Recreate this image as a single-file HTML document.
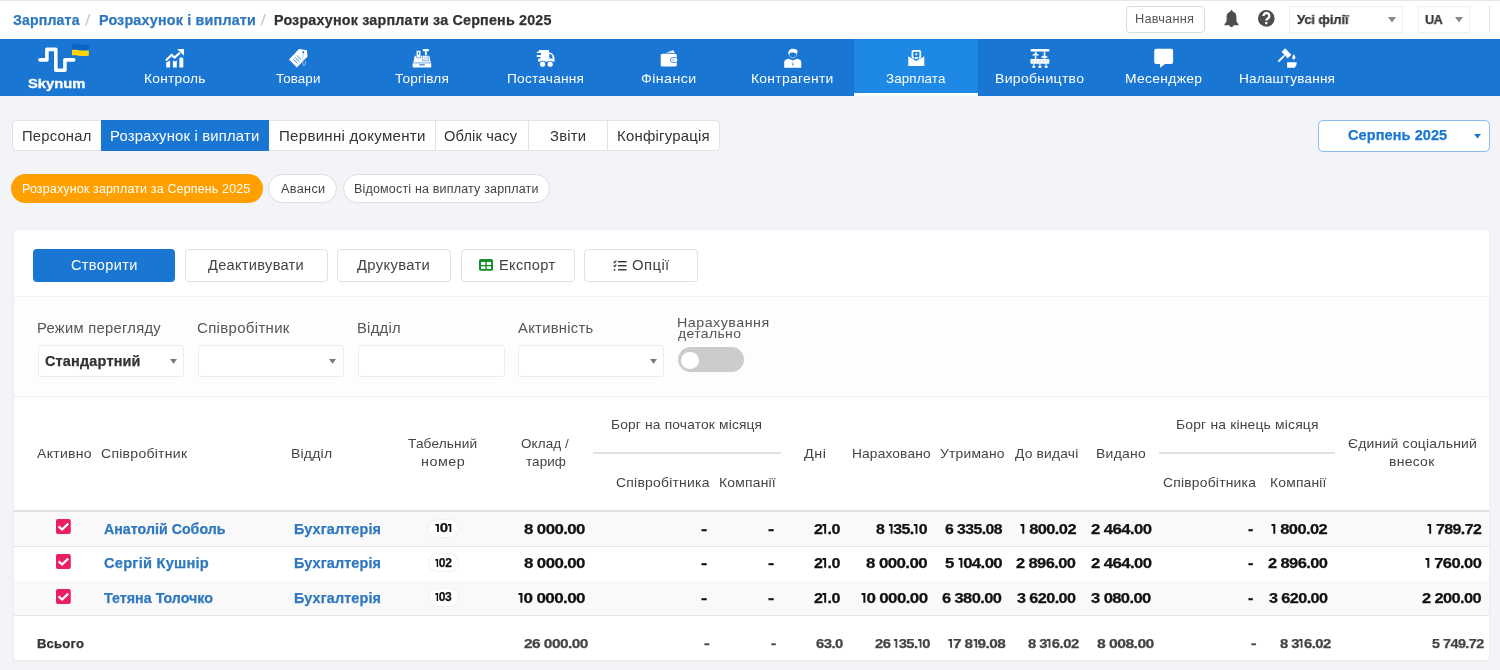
<!DOCTYPE html>
<html><head><meta charset="utf-8"><style>
html,body{margin:0;padding:0;}
body{width:1500px;height:670px;position:relative;overflow:hidden;background:#f3f4f8;font-family:"Liberation Sans",sans-serif;}
.t{position:absolute;white-space:nowrap;line-height:20px;transform-origin:0 0;will-change:transform;}
.b{position:absolute;}
</style></head><body>
<div class="b" style="left:0px;top:0px;width:1500px;height:39px;background:#fff;"></div>
<div class="b" style="left:0px;top:0px;width:1500px;height:1px;background:#e6e6e6;"></div>
<div class="t" style="left:13.07px;top:11.00px;font-size:13.8px;font-weight:bold;color:#2f78bf;letter-spacing:0.143px;transform:scaleX(1.0241);-webkit-text-stroke:0.25px #2f78bf;">Зарплата</div>
<svg class="b" style="left:0;top:0" width="300" height="39"><path d="M85.7 25.6L89.8 14M261.2 25.6L265.3 14" stroke="#cccccc" stroke-width="1.5"/></svg>
<div class="t" style="left:98.54px;top:11.00px;font-size:13.8px;font-weight:bold;color:#2f78bf;letter-spacing:0.184px;transform:scaleX(1.0372);-webkit-text-stroke:0.25px #2f78bf;">Розрахунок і виплати</div>
<div class="t" style="left:273.54px;top:11.00px;font-size:13.8px;font-weight:bold;color:#333;letter-spacing:0.183px;transform:scaleX(1.0371);-webkit-text-stroke:0.25px #333;">Розрахунок зарплати за Серпень 2025</div>
<div class="b" style="left:1126px;top:6px;width:79px;height:27px;border:1px solid #dcdcdc;border-radius:4px;box-sizing:border-box;"></div>
<div class="t" style="left:1135.35px;top:9.00px;font-size:12.3px;color:#555;letter-spacing:0.204px;transform:scaleX(1.0413);">Навчання</div>
<svg class="b" style="left:1223px;top:9px" width="17" height="19" viewBox="0 0 17 19"><path fill="#4d4d4d" d="M8.5 1c.6 0 1 .4 1 .9v.6c2.4.5 3.9 2.5 3.9 5.1v3.6c0 1.1.6 2.2 1.5 3.2l.6.6v1.2H1.5v-1.2l.6-.6c.9-1 1.5-2.1 1.5-3.2V7.6c0-2.6 1.5-4.6 3.9-5.1v-.6c0-.5.4-.9 1-.9zM6.5 16.2h4c0 1.1-.9 1.9-2 1.9s-2-.8-2-1.9z"/></svg>
<svg class="b" style="left:1257px;top:9px" width="19" height="19" viewBox="1257 9 19 19"><circle cx="1266.3" cy="18.4" r="8.3" fill="#4d4d4d"/><path d="M1263.5 15.9A2.9 2.9 0 1 1 1268.2 18.2C1267.1 18.9 1266.3 19.4 1266.3 20.6" stroke="#fff" stroke-width="2.3" fill="none"/><circle cx="1266.25" cy="23.1" r="1.3" fill="#fff"/></svg>
<div class="b" style="left:1289px;top:6px;width:114px;height:27px;border:1px solid #efefef;box-sizing:border-box;"></div>
<div class="t" style="left:1297.29px;top:10.00px;font-size:13.5px;font-weight:bold;color:#333;letter-spacing:-0.135px;transform:scaleX(0.9716);-webkit-text-stroke:0.25px #333;">Усі філії</div>
<svg class="b" style="left:1387.5px;top:16.5px" width="8" height="6"><path d="M0 0h8L4 5.5z" fill="#888"/></svg>
<div class="b" style="left:1418px;top:6px;width:52px;height:27px;border:1px solid #efefef;box-sizing:border-box;"></div>
<div class="t" style="left:1425.23px;top:10.00px;font-size:13.5px;font-weight:bold;color:#333;letter-spacing:-0.647px;transform:scaleX(0.9498);-webkit-text-stroke:0.25px #333;">UA</div>
<svg class="b" style="left:1454.5px;top:16.5px" width="8" height="6"><path d="M0 0h8L4 5.5z" fill="#888"/></svg>
<div class="b" style="left:1489px;top:6px;width:1px;height:26px;background:#e0e0e0;"></div>
<div class="b" style="left:0px;top:39px;width:1500px;height:57px;background:#1976d2;"></div>
<div class="b" style="left:854px;top:39px;width:124px;height:57px;background:#1e88e5;"></div>
<div class="b" style="left:854px;top:93px;width:124px;height:3px;background:#fff;"></div>
<div class="t" style="left:143.77px;top:69.00px;font-size:13.2px;color:#fff;letter-spacing:0.229px;transform:scaleX(1.0450);">Контроль</div>
<div class="t" style="left:275.71px;top:69.00px;font-size:13.2px;color:#fff;letter-spacing:0.089px;transform:scaleX(1.0158);">Товари</div>
<div class="t" style="left:394.50px;top:69.00px;font-size:13.2px;color:#fff;letter-spacing:0.158px;transform:scaleX(1.0335);">Торгівля</div>
<div class="t" style="left:506.79px;top:69.00px;font-size:13.2px;color:#fff;letter-spacing:0.202px;transform:scaleX(1.0401);">Постачання</div>
<div class="t" style="left:641.17px;top:69.00px;font-size:13.2px;color:#fff;letter-spacing:0.384px;transform:scaleX(1.0791);">Фінанси</div>
<div class="t" style="left:751.26px;top:69.00px;font-size:13.2px;color:#fff;letter-spacing:0.254px;transform:scaleX(1.0543);">Контрагенти</div>
<div class="t" style="left:886.16px;top:69.00px;font-size:13.2px;color:#fff;letter-spacing:0.090px;transform:scaleX(1.0167);">Зарплата</div>
<div class="t" style="left:995.35px;top:69.00px;font-size:13.2px;color:#fff;letter-spacing:0.305px;transform:scaleX(1.0612);">Виробництво</div>
<div class="t" style="left:1124.86px;top:69.00px;font-size:13.2px;color:#fff;letter-spacing:0.288px;transform:scaleX(1.0526);">Месенджер</div>
<div class="t" style="left:1239.18px;top:69.00px;font-size:13.2px;color:#fff;letter-spacing:0.168px;transform:scaleX(1.0320);">Налаштування</div>
<div class="t" style="left:27.57px;top:74.00px;font-size:12.8px;font-weight:bold;color:#fff;letter-spacing:0.000px;transform:scaleX(1.1516);-webkit-text-stroke:0.3px #fff;">Skynum</div>
<svg class="b" style="left:20px;top:40px" width="80" height="40" viewBox="0 0 80 40"><path d="M20 19.9H26.9V9.4H35.8V30.2H44.9V19.9H53.7" stroke="#fff" stroke-width="3.6" fill="none" stroke-linecap="round" stroke-linejoin="round"/><path d="M52 4.3C56 3.2 60 5.6 68.8 4.5V10.3C60 11.4 56 9 52 10.1Z" fill="#0b63c8"/><path d="M52 10.1C56 9 60 11.4 68.8 10.3V15.8C60 16.9 56 14.5 52 15.6Z" fill="#ffd500"/></svg>
<svg class="b" style="left:160px;top:45px" width="30" height="25" viewBox="0 0 30 25"><path d="M5.8 15.4L11.6 9.9L14.6 12.6L19.8 7.9" stroke="#fff" stroke-width="2.1" fill="none" stroke-linejoin="miter"/><path d="M17.2 4.0L24.1 3.9L23.9 10.7Z" fill="#fff"/><path d="M6.2 22.6V17.4L10.1 15.6V22.6Z M12.9 22.6V15.4L14.85 16.6L16.8 15.4V22.6Z M19.4 22.6V13.2L21.35 11.9L23.3 13.2V22.6Z" fill="#fff"/></svg>
<svg class="b" style="left:283px;top:45px" width="30" height="25" viewBox="0 0 30 25"><path d="M6 14.6L16 4.1L23.9 5.2L24.6 11.6L13.8 22.4Z" fill="#fff"/><circle cx="20.3" cy="7.3" r="1.1" fill="#1976d2"/><path d="M10.2 14.1L14.6 18.4M12 12.3L16.3 16.6M13.9 10.5L18 14.6" stroke="#1976d2" stroke-width="0.9"/><path d="M20.3 8.2C19.6 12.5 19.3 19.8 20.6 20.6C21.8 21.2 22.6 18.2 22.7 16" stroke="#a9cdf0" stroke-width="0.9" fill="none"/></svg>
<svg class="b" style="left:407px;top:45px" width="30" height="25" viewBox="0 0 30 25"><path d="M5.6 18.2H24.3V21.8Q24.3 22.6 23.5 22.6H6.4Q5.6 22.6 5.6 21.8Z" fill="#fff"/><rect x="12.3" y="19.3" width="5.4" height="1.1" fill="#1976d2"/><path d="M6.2 17.4L7.8 10.8H22.4L23.7 17.4Z" fill="#fff"/><rect x="9.3" y="5.6" width="4.5" height="7.2" rx="0.6" fill="#fff" stroke="#1976d2" stroke-width="0.6"/><rect x="11" y="7.3" width="1" height="2.4" fill="#1976d2"/><rect x="15.7" y="3.9" width="6.3" height="2.4" rx="1" fill="#fff"/><rect x="17.9" y="6.2" width="1.9" height="4.3" fill="#fff"/><rect x="15.8" y="10.6" width="5.3" height="5.3" fill="#fff" stroke="#1976d2" stroke-width="0.5"/><path d="M15.9 12.4H21M15.9 14.1H21M17.6 10.8V15.8M19.3 10.8V15.8" stroke="#9cc6ee" stroke-width="0.4"/><rect x="6" y="17.2" width="18" height="0.7" fill="#b8d6f3"/></svg>
<svg class="b" style="left:531px;top:45px" width="30" height="25" viewBox="0 0 30 25"><path d="M7.8 5H17.9V7.3Q22 7.6 23.5 12.5V16.8H7.2V13.6H9.6V11.9H5.8V10H10V8H5.8V6.7H7.8Z" fill="#fff"/><path d="M18.3 9H19.5Q21.2 9.6 21.7 13.4H18.3Z" fill="#1976d2"/><circle cx="11.6" cy="19.2" r="3.4" fill="#1976d2"/><circle cx="19.2" cy="19.2" r="3.4" fill="#1976d2"/><circle cx="11.6" cy="19.2" r="2.6" fill="#fff"/><circle cx="19.2" cy="19.2" r="2.6" fill="#fff"/></svg>
<svg class="b" style="left:654px;top:45px" width="30" height="25" viewBox="0 0 30 25"><path d="M11.9 7.8L19.4 4.9L20.9 8Z" fill="#dcebf9"/><rect x="6.7" y="8.8" width="16.1" height="12.8" rx="1.6" fill="#fff"/><rect x="16.4" y="12.5" width="7.3" height="5" rx="2.4" fill="#fff" stroke="#1976d2" stroke-width="0.7"/><circle cx="19" cy="15" r="1.1" fill="none" stroke="#7fb3e8" stroke-width="0.6"/></svg>
<svg class="b" style="left:778px;top:45px" width="30" height="25" viewBox="0 0 30 25"><path d="M6.2 22.8V17.6Q6.2 14.3 10.5 13.8L14.9 15.6L19.2 13.8Q23.3 14.3 23.3 17.6V22.8Z" fill="#fff"/><path d="M14.9 16L14.1 20L14.9 21L15.7 20Z" fill="#1976d2" opacity="0.7"/><path d="M11.2 8.6C11.5 11.5 13 13 14.9 13C16.8 13 18.3 11.5 18.6 8.6" stroke="#d6e7f8" stroke-width="0.7" fill="none"/><path d="M10.3 9.3C10 5.5 12 3.7 15 3.7C17.5 3.7 19.8 4.6 19.6 6.4C19.5 7.4 19 8.4 18.6 9.3C17.8 7.6 15 8 13 7.6C12 8.5 11.4 9 10.3 9.3Z" fill="#fff"/></svg>
<svg class="b" style="left:901px;top:45px" width="30" height="25" viewBox="0 0 30 25"><rect x="11.4" y="5.8" width="7.9" height="7" rx="1.2" fill="none" stroke="#fff" stroke-width="1.7"/><circle cx="15.3" cy="9.2" r="1.0" fill="#fff"/><path d="M7.3 11.2L15.3 16L23.3 11.2V20.9H7.3Z" fill="#fff"/><ellipse cx="15.3" cy="13" rx="2.6" ry="1.7" fill="#1e88e5"/><ellipse cx="15.3" cy="12.9" rx="1.7" ry="1.0" fill="#fff"/></svg>
<svg class="b" style="left:1025px;top:45px" width="30" height="25" viewBox="0 0 30 25"><rect x="5.6" y="3.9" width="18.8" height="2.6" rx="0.8" fill="#fff"/><rect x="9.9" y="6.4" width="1.6" height="2.4" fill="#fff"/><path d="M7.1 10.6Q7.6 8.4 10.6 8.4Q13.5 8.4 14 10.6Z" fill="#fff"/><rect x="18.7" y="6.4" width="1.6" height="4.6" fill="#fff"/><path d="M16 12.7Q16.5 10.6 19.4 10.6Q22.3 10.6 22.8 12.7Z" fill="#fff"/><rect x="9.8" y="10.6" width="1.6" height="3.4" fill="#fff"/><rect x="18.7" y="12.7" width="1.6" height="1.4" fill="#fff"/><rect x="5.4" y="14" width="19" height="4.7" rx="1" fill="#fff"/><path d="M7.5 15.2L9 17.4M9 15.2L7.5 17.4M10.8 15.2L12.3 17.4M12.3 15.2L10.8 17.4M14.1 15.2L15.6 17.4M15.6 15.2L14.1 17.4M17.4 15.2L18.9 17.4M18.9 15.2L17.4 17.4M20.7 15.2L22.2 17.4M22.2 15.2L20.7 17.4" stroke="#8fbdea" stroke-width="0.5"/><rect x="8.2" y="18.7" width="1.2" height="2" fill="#fff"/><rect x="14.3" y="18.7" width="1.2" height="2" fill="#fff"/><rect x="20.5" y="18.7" width="1.2" height="2" fill="#fff"/><ellipse cx="8.8" cy="21.8" rx="1.7" ry="1.1" fill="#fff"/><ellipse cx="14.9" cy="21.8" rx="1.8" ry="1.1" fill="#fff"/><ellipse cx="21.2" cy="21.8" rx="1.8" ry="1.1" fill="#fff"/></svg>
<svg class="b" style="left:1149px;top:45px" width="30" height="25" viewBox="0 0 30 25"><path d="M7.2 3.7H22.1Q24.1 3.7 24.1 5.7V17Q24.1 19 22.1 19H16L11.2 22.8L10.8 19H7.2Q5.2 19 5.2 17V5.7Q5.2 3.7 7.2 3.7Z" fill="#fff"/></svg>
<svg class="b" style="left:1272px;top:45px" width="30" height="25" viewBox="0 0 30 25"><path d="M9.9 6.9L13.1 3.7L19 9.7L15.7 12.9Z" fill="#fff" stroke="#fff" stroke-width="0.8" stroke-linejoin="round"/><path d="M6.9 16L11.8 11.1" stroke="#fff" stroke-width="1.9" stroke-linecap="round"/><path d="M21.8 9.1L23.6 12.7L21.8 14.9L20 12.7Z" fill="#fff"/><path d="M15.1 17.6Q15.1 17.2 15.5 17.2H24.8L24.2 20.5L22.6 22.8H15.5Q15.1 22.8 15.1 22.4Z" fill="#fff"/></svg>
<div class="b" style="left:12px;top:120px;width:708px;height:31px;background:#fff;border:1px solid #e3e3e3;border-radius:4px;box-sizing:border-box;"></div>
<div class="b" style="left:101px;top:120px;width:168px;height:31px;background:#1976d2;"></div>
<div class="b" style="left:435px;top:121px;width:1px;height:30px;background:#e3e3e3;"></div>
<div class="b" style="left:528px;top:121px;width:1px;height:30px;background:#e3e3e3;"></div>
<div class="b" style="left:607px;top:121px;width:1px;height:30px;background:#e3e3e3;"></div>
<div class="t" style="left:22.40px;top:126.00px;font-size:14.3px;color:#333;letter-spacing:0.197px;transform:scaleX(1.0338);">Персонал</div>
<div class="t" style="left:110.18px;top:126.00px;font-size:14.3px;color:#fff;letter-spacing:0.175px;transform:scaleX(1.0371);">Розрахунок і виплати</div>
<div class="t" style="left:279.18px;top:126.00px;font-size:14.3px;color:#333;letter-spacing:0.260px;transform:scaleX(1.0526);">Первинні документи</div>
<div class="t" style="left:444.21px;top:126.00px;font-size:14.3px;color:#333;letter-spacing:0.127px;transform:scaleX(1.0251);">Облік часу</div>
<div class="t" style="left:550.01px;top:126.00px;font-size:14.3px;color:#333;letter-spacing:0.195px;transform:scaleX(1.0373);">Звіти</div>
<div class="t" style="left:616.98px;top:126.00px;font-size:14.3px;color:#333;letter-spacing:0.218px;transform:scaleX(1.0445);">Конфігурація</div>
<div class="b" style="left:1318px;top:120px;width:172px;height:32px;background:#fff;border:1px solid #8db9ea;border-radius:5px;box-sizing:border-box;"></div>
<div class="t" style="left:1348.40px;top:125.00px;font-size:14.3px;font-weight:bold;color:#1976d2;letter-spacing:0.085px;transform:scaleX(1.0148);-webkit-text-stroke:0.25px #1976d2;">Серпень 2025</div>
<svg class="b" style="left:1474.4px;top:133.6px" width="7" height="5"><path d="M0 0h7L3.5 4.5z" fill="#1976d2"/></svg>
<div class="b" style="left:11px;top:174px;width:252px;height:29px;background:#ffa000;border-radius:15px;"></div>
<div class="t" style="left:22.28px;top:179.00px;font-size:12px;color:#fff;letter-spacing:0.154px;transform:scaleX(1.0382);">Розрахунок зарплати за Серпень 2025</div>
<div class="b" style="left:268px;top:174px;width:69px;height:29px;background:#fff;border:1px solid #dedede;border-radius:15px;box-sizing:border-box;"></div>
<div class="t" style="left:280.77px;top:179.00px;font-size:12px;color:#444;letter-spacing:0.293px;transform:scaleX(1.0588);">Аванси</div>
<div class="b" style="left:343px;top:174px;width:207px;height:29px;background:#fff;border:1px solid #dedede;border-radius:15px;box-sizing:border-box;"></div>
<div class="t" style="left:354.37px;top:179.00px;font-size:12px;color:#444;letter-spacing:0.166px;transform:scaleX(1.0425);">Відомості на виплату зарплати</div>
<div class="b" style="left:14px;top:230px;width:1475px;height:430px;background:#fff;border-radius:3px;box-shadow:0 0 0 1px #eceef2,0 1px 4px rgba(0,0,0,0.05);"></div>
<div class="b" style="left:14px;top:296px;width:1475px;height:1px;background:#f2f2f2;"></div>
<div class="b" style="left:14px;top:297px;width:1475px;height:99px;background:#fdfdfd;"></div>
<div class="b" style="left:14px;top:396px;width:1475px;height:1px;background:#efefef;"></div>
<div class="b" style="left:33px;top:249px;width:142px;height:33px;background:#1976d2;border-radius:4px;"></div>
<div class="t" style="left:70.86px;top:256.00px;font-size:13.8px;color:#fff;letter-spacing:0.306px;transform:scaleX(1.0575);">Створити</div>
<div class="b" style="left:185px;top:249px;width:143px;height:33px;background:#fff;border:1px solid #e0e0e0;border-radius:4px;box-sizing:border-box;"></div>
<div class="b" style="left:337px;top:249px;width:114px;height:33px;background:#fff;border:1px solid #e0e0e0;border-radius:4px;box-sizing:border-box;"></div>
<div class="b" style="left:461px;top:249px;width:114px;height:33px;background:#fff;border:1px solid #e0e0e0;border-radius:4px;box-sizing:border-box;"></div>
<div class="b" style="left:584px;top:249px;width:114px;height:33px;background:#fff;border:1px solid #e0e0e0;border-radius:4px;box-sizing:border-box;"></div>
<div class="t" style="left:207.80px;top:256.00px;font-size:13.8px;color:#444;letter-spacing:0.286px;transform:scaleX(1.0575);">Деактивувати</div>
<div class="t" style="left:357.40px;top:256.00px;font-size:13.8px;color:#444;letter-spacing:0.345px;transform:scaleX(1.0681);">Друкувати</div>
<div class="t" style="left:499.10px;top:256.00px;font-size:13.8px;color:#444;letter-spacing:0.313px;transform:scaleX(1.0599);">Експорт</div>
<div class="t" style="left:632.20px;top:256.00px;font-size:13.8px;color:#444;letter-spacing:0.387px;transform:scaleX(1.0777);">Опції</div>
<svg class="b" style="left:479px;top:258.6px" width="14" height="12" viewBox="0 0 14 12"><rect x="0" y="0" width="14" height="11.7" rx="1.5" fill="#15902b"/><rect x="2" y="3" width="4.3" height="3" fill="#fff"/><rect x="7.7" y="3" width="4.3" height="3" fill="#fff"/><rect x="2" y="7.3" width="4.3" height="2.6" fill="#fff"/><rect x="7.7" y="7.3" width="4.3" height="2.6" fill="#fff"/></svg>
<svg class="b" style="left:613px;top:259.5px" width="14" height="11" viewBox="0 0 14 11"><path d="M0.6 1.6l1 1 1.8-2" stroke="#333" stroke-width="1.2" fill="none"/><path d="M0.6 5.6l1 1 1.8-2" stroke="#333" stroke-width="1.2" fill="none"/><circle cx="1.6" cy="9.8" r="0.9" fill="#333"/><rect x="5" y="1" width="8.5" height="1.4" fill="#333"/><rect x="5" y="5" width="8.5" height="1.4" fill="#333"/><rect x="5" y="9.1" width="8.5" height="1.4" fill="#333"/></svg>
<div class="t" style="left:36.89px;top:318.00px;font-size:14px;color:#555;letter-spacing:0.271px;transform:scaleX(1.0527);">Режим перегляду</div>
<div class="t" style="left:197.24px;top:318.00px;font-size:14px;color:#555;letter-spacing:0.317px;transform:scaleX(1.0679);">Співробітник</div>
<div class="t" style="left:357.19px;top:318.00px;font-size:14px;color:#555;letter-spacing:0.262px;transform:scaleX(1.0546);">Відділ</div>
<div class="t" style="left:517.87px;top:318.00px;font-size:14px;color:#555;letter-spacing:0.270px;transform:scaleX(1.0566);">Активність</div>
<div class="t" style="left:677.03px;top:313.00px;font-size:13px;color:#555;letter-spacing:0.458px;transform:scaleX(1.0970);">Нарахування</div>
<div class="t" style="left:678.06px;top:324.00px;font-size:13px;color:#555;letter-spacing:0.358px;transform:scaleX(1.0718);">детально</div>
<div class="b" style="left:38px;top:345px;width:146px;height:32px;background:#fff;border:1px solid #ececec;border-radius:3px;box-sizing:border-box;"></div>
<div class="b" style="left:198px;top:345px;width:146px;height:32px;background:#fff;border:1px solid #ececec;border-radius:3px;box-sizing:border-box;"></div>
<div class="b" style="left:358px;top:345px;width:147px;height:32px;background:#fff;border:1px solid #ececec;border-radius:3px;box-sizing:border-box;"></div>
<div class="b" style="left:518px;top:345px;width:146px;height:32px;background:#fff;border:1px solid #ececec;border-radius:3px;box-sizing:border-box;"></div>
<div class="t" style="left:45.41px;top:351.00px;font-size:14px;font-weight:bold;color:#333;letter-spacing:0.181px;transform:scaleX(1.0314);-webkit-text-stroke:0.25px #333;">Стандартний</div>
<svg class="b" style="left:169.6px;top:358.6px" width="7" height="5"><path d="M0 0h7L3.5 4.7z" fill="#777"/></svg>
<svg class="b" style="left:329.4px;top:358.6px" width="7" height="5"><path d="M0 0h7L3.5 4.7z" fill="#777"/></svg>
<svg class="b" style="left:649.7px;top:358.6px" width="7" height="5"><path d="M0 0h7L3.5 4.7z" fill="#777"/></svg>
<div class="b" style="left:678px;top:347px;width:66px;height:25px;background:#cccccc;border-radius:13px;"></div>
<div class="b" style="left:681.4px;top:351.5px;width:17.4px;height:17.4px;border-radius:50%;background:#fff;"></div>
<div class="t" style="left:37.47px;top:444.00px;font-size:13.3px;color:#444;letter-spacing:0.283px;transform:scaleX(1.0542);">Активно</div>
<div class="t" style="left:100.58px;top:444.00px;font-size:13.3px;color:#444;letter-spacing:0.246px;transform:scaleX(1.0547);">Співробітник</div>
<div class="t" style="left:291.16px;top:444.00px;font-size:13.3px;color:#444;letter-spacing:0.218px;transform:scaleX(1.0475);">Відділ</div>
<div class="t" style="left:408.00px;top:434.00px;font-size:13.3px;color:#444;letter-spacing:0.146px;transform:scaleX(1.0271);">Табельний</div>
<div class="t" style="left:421.21px;top:452.00px;font-size:13.3px;color:#444;letter-spacing:0.454px;transform:scaleX(1.0790);">номер</div>
<div class="t" style="left:521.37px;top:434.00px;font-size:13.3px;color:#444;letter-spacing:0.076px;transform:scaleX(1.0151);">Оклад /</div>
<div class="t" style="left:525.57px;top:452.00px;font-size:13.3px;color:#444;letter-spacing:0.073px;transform:scaleX(1.0115);">тариф</div>
<div class="t" style="left:610.77px;top:415.00px;font-size:13.3px;color:#444;letter-spacing:0.158px;transform:scaleX(1.0366);">Борг на початок місяця</div>
<div class="b" style="left:593px;top:452px;width:188px;height:2px;background:#e2e2e2;"></div>
<div class="t" style="left:616.09px;top:473.00px;font-size:13.3px;color:#444;letter-spacing:0.217px;transform:scaleX(1.0477);">Співробітника</div>
<div class="t" style="left:718.76px;top:473.00px;font-size:13.3px;color:#444;letter-spacing:0.205px;transform:scaleX(1.0434);">Компанії</div>
<div class="t" style="left:803.50px;top:444.00px;font-size:13.3px;color:#444;letter-spacing:0.476px;transform:scaleX(1.0845);">Дні</div>
<div class="t" style="left:851.78px;top:444.00px;font-size:13.3px;color:#444;letter-spacing:0.164px;transform:scaleX(1.0311);">Нараховано</div>
<div class="t" style="left:940.13px;top:444.00px;font-size:13.3px;color:#444;letter-spacing:0.213px;transform:scaleX(1.0389);">Утримано</div>
<div class="t" style="left:1014.90px;top:444.00px;font-size:13.3px;color:#444;letter-spacing:0.181px;transform:scaleX(1.0384);">До видачі</div>
<div class="t" style="left:1095.96px;top:444.00px;font-size:13.3px;color:#444;letter-spacing:0.271px;transform:scaleX(1.0478);">Видано</div>
<div class="t" style="left:1176.06px;top:415.00px;font-size:13.3px;color:#444;letter-spacing:0.180px;transform:scaleX(1.0430);">Борг на кінець місяця</div>
<div class="b" style="left:1159px;top:452px;width:176px;height:2px;background:#e2e2e2;"></div>
<div class="t" style="left:1163.29px;top:473.00px;font-size:13.3px;color:#444;letter-spacing:0.201px;transform:scaleX(1.0442);">Співробітника</div>
<div class="t" style="left:1269.66px;top:473.00px;font-size:13.3px;color:#444;letter-spacing:0.194px;transform:scaleX(1.0411);">Компанії</div>
<div class="t" style="left:1347.59px;top:434.00px;font-size:13.3px;color:#444;letter-spacing:0.216px;transform:scaleX(1.0460);">Єдиний соціальний</div>
<div class="t" style="left:1389.34px;top:452.00px;font-size:13.3px;color:#444;letter-spacing:0.258px;transform:scaleX(1.0498);">внесок</div>
<div class="b" style="left:14px;top:510px;width:1475px;height:2px;background:#e0e0e0;"></div>
<div class="b" style="left:14px;top:512px;width:1475px;height:35px;background:#f9f9f9;"></div>
<div class="b" style="left:14px;top:546px;width:1475px;height:1px;background:#e6e6e6;"></div>
<svg class="b" style="left:55.6px;top:519.3px" width="15" height="15" viewBox="0 0 15 15"><rect width="14.8" height="14.9" rx="2" fill="#e91e63"/><path d="M2.6 7.4L6.1 10.6L12.2 4.6" stroke="#fff" stroke-width="2.2" fill="none"/></svg>
<div class="t" style="left:103.95px;top:519.00px;font-size:14.1px;font-weight:bold;color:#2f78bf;letter-spacing:0.034px;transform:scaleX(1.0059);-webkit-text-stroke:0.25px #2f78bf;">Анатолій Соболь</div>
<div class="t" style="left:293.84px;top:519.00px;font-size:14.1px;font-weight:bold;color:#2f78bf;letter-spacing:0.115px;transform:scaleX(1.0214);-webkit-text-stroke:0.25px #2f78bf;">Бухгалтерія</div>
<div class="b" style="left:429px;top:520px;width:29px;height:17px;background:#fff;border-radius:9px;box-shadow:0 0 1px 1px #f0f0f0;"></div>
<div class="t" style="left:434.75px;top:518.00px;font-size:12px;font-weight:bold;color:#111;letter-spacing:-0.429px;transform:scaleX(1.2456);-webkit-text-stroke:0.25px #111;"><svg width="3.84" height="8.26" viewBox="0 0 3.84 8.26" style="vertical-align:0"><path d="M0.36 0H3.12V8.26H1.68V1.80H0.36Z" fill="currentColor"/></svg>0<svg width="3.84" height="8.26" viewBox="0 0 3.84 8.26" style="vertical-align:0"><path d="M0.36 0H3.12V8.26H1.68V1.80H0.36Z" fill="currentColor"/></svg></div>
<div class="t" style="left:524.26px;top:519.00px;font-size:14.1px;font-weight:bold;color:#111;letter-spacing:-0.504px;transform:scaleX(1.1961);-webkit-text-stroke:0.25px #111;">8 000.00</div>
<div class="t" style="left:813.94px;top:519.00px;font-size:14.1px;font-weight:bold;color:#111;letter-spacing:-0.504px;transform:scaleX(1.1393);-webkit-text-stroke:0.25px #111;">2<svg width="4.51" height="9.70" viewBox="0 0 4.51 9.70" style="vertical-align:0"><path d="M0.42 0H3.67V9.70H1.97V2.11H0.42Z" fill="currentColor"/></svg>.0</div>
<div class="t" style="left:876.19px;top:519.00px;font-size:14.1px;font-weight:bold;color:#111;letter-spacing:-0.504px;transform:scaleX(1.1303);-webkit-text-stroke:0.25px #111;">8 <svg width="4.51" height="9.70" viewBox="0 0 4.51 9.70" style="vertical-align:0"><path d="M0.42 0H3.67V9.70H1.97V2.11H0.42Z" fill="currentColor"/></svg>35.<svg width="4.51" height="9.70" viewBox="0 0 4.51 9.70" style="vertical-align:0"><path d="M0.42 0H3.67V9.70H1.97V2.11H0.42Z" fill="currentColor"/></svg>0</div>
<div class="t" style="left:944.62px;top:519.00px;font-size:14.1px;font-weight:bold;color:#111;letter-spacing:-0.504px;transform:scaleX(1.1210);-webkit-text-stroke:0.25px #111;">6 335.08</div>
<div class="t" style="left:1019.81px;top:519.00px;font-size:14.1px;font-weight:bold;color:#111;letter-spacing:-0.504px;transform:scaleX(1.1652);-webkit-text-stroke:0.25px #111;"><svg width="4.51" height="9.70" viewBox="0 0 4.51 9.70" style="vertical-align:0"><path d="M0.42 0H3.67V9.70H1.97V2.11H0.42Z" fill="currentColor"/></svg> 800.02</div>
<div class="t" style="left:1090.71px;top:519.00px;font-size:14.1px;font-weight:bold;color:#111;letter-spacing:-0.504px;transform:scaleX(1.1872);-webkit-text-stroke:0.25px #111;">2 464.00</div>
<div class="t" style="left:1271.31px;top:519.00px;font-size:14.1px;font-weight:bold;color:#111;letter-spacing:-0.504px;transform:scaleX(1.1694);-webkit-text-stroke:0.25px #111;"><svg width="4.51" height="9.70" viewBox="0 0 4.51 9.70" style="vertical-align:0"><path d="M0.42 0H3.67V9.70H1.97V2.11H0.42Z" fill="currentColor"/></svg> 800.02</div>
<div class="t" style="left:1426.52px;top:519.00px;font-size:14.1px;font-weight:bold;color:#111;letter-spacing:-0.504px;transform:scaleX(1.1295);-webkit-text-stroke:0.25px #111;"><svg width="4.51" height="9.70" viewBox="0 0 4.51 9.70" style="vertical-align:0"><path d="M0.42 0H3.67V9.70H1.97V2.11H0.42Z" fill="currentColor"/></svg> 789.72</div>
<div class="t" style="left:701.26px;top:519.00px;font-size:14.1px;font-weight:bold;color:#111;letter-spacing:-0.504px;transform:scaleX(1.3403);-webkit-text-stroke:0.25px #111;">-</div>
<div class="t" style="left:767.66px;top:519.00px;font-size:14.1px;font-weight:bold;color:#111;letter-spacing:-0.504px;transform:scaleX(1.3403);-webkit-text-stroke:0.25px #111;">-</div>
<div class="t" style="left:1248.37px;top:519.00px;font-size:14.1px;font-weight:bold;color:#111;letter-spacing:-0.504px;transform:scaleX(1.1448);-webkit-text-stroke:0.25px #111;">-</div>
<div class="b" style="left:14px;top:547px;width:1475px;height:34px;background:#ffffff;"></div>
<div class="b" style="left:14px;top:581px;width:1475px;height:1px;background:#e6e6e6;"></div>
<svg class="b" style="left:55.6px;top:554.4px" width="15" height="15" viewBox="0 0 15 15"><rect width="14.8" height="14.9" rx="2" fill="#e91e63"/><path d="M2.6 7.4L6.1 10.6L12.2 4.6" stroke="#fff" stroke-width="2.2" fill="none"/></svg>
<div class="t" style="left:103.70px;top:553.00px;font-size:14.1px;font-weight:bold;color:#2f78bf;letter-spacing:0.208px;transform:scaleX(1.0401);-webkit-text-stroke:0.25px #2f78bf;">Сергій Кушнір</div>
<div class="t" style="left:293.84px;top:553.00px;font-size:14.1px;font-weight:bold;color:#2f78bf;letter-spacing:0.115px;transform:scaleX(1.0214);-webkit-text-stroke:0.25px #2f78bf;">Бухгалтерія</div>
<div class="b" style="left:429px;top:554px;width:29px;height:17px;background:#fff;border-radius:9px;box-shadow:0 0 1px 1px #f0f0f0;"></div>
<div class="t" style="left:434.84px;top:553.00px;font-size:12px;font-weight:bold;color:#111;letter-spacing:-0.429px;transform:scaleX(1.0052);-webkit-text-stroke:0.25px #111;"><svg width="3.84" height="8.26" viewBox="0 0 3.84 8.26" style="vertical-align:0"><path d="M0.36 0H3.12V8.26H1.68V1.80H0.36Z" fill="currentColor"/></svg>02</div>
<div class="t" style="left:524.26px;top:553.00px;font-size:14.1px;font-weight:bold;color:#111;letter-spacing:-0.504px;transform:scaleX(1.1961);-webkit-text-stroke:0.25px #111;">8 000.00</div>
<div class="t" style="left:813.94px;top:553.00px;font-size:14.1px;font-weight:bold;color:#111;letter-spacing:-0.504px;transform:scaleX(1.1393);-webkit-text-stroke:0.25px #111;">2<svg width="4.51" height="9.70" viewBox="0 0 4.51 9.70" style="vertical-align:0"><path d="M0.42 0H3.67V9.70H1.97V2.11H0.42Z" fill="currentColor"/></svg>.0</div>
<div class="t" style="left:866.16px;top:553.00px;font-size:14.1px;font-weight:bold;color:#111;letter-spacing:-0.504px;transform:scaleX(1.2021);-webkit-text-stroke:0.25px #111;">8 000.00</div>
<div class="t" style="left:944.68px;top:553.00px;font-size:14.1px;font-weight:bold;color:#111;letter-spacing:-0.504px;transform:scaleX(1.1890);-webkit-text-stroke:0.25px #111;">5 <svg width="4.51" height="9.70" viewBox="0 0 4.51 9.70" style="vertical-align:0"><path d="M0.42 0H3.67V9.70H1.97V2.11H0.42Z" fill="currentColor"/></svg>04.00</div>
<div class="t" style="left:1016.42px;top:553.00px;font-size:14.1px;font-weight:bold;color:#111;letter-spacing:-0.504px;transform:scaleX(1.1673);-webkit-text-stroke:0.25px #111;">2 896.00</div>
<div class="t" style="left:1090.71px;top:553.00px;font-size:14.1px;font-weight:bold;color:#111;letter-spacing:-0.504px;transform:scaleX(1.1872);-webkit-text-stroke:0.25px #111;">2 464.00</div>
<div class="t" style="left:1268.12px;top:553.00px;font-size:14.1px;font-weight:bold;color:#111;letter-spacing:-0.504px;transform:scaleX(1.1673);-webkit-text-stroke:0.25px #111;">2 896.00</div>
<div class="t" style="left:1424.50px;top:553.00px;font-size:14.1px;font-weight:bold;color:#111;letter-spacing:-0.504px;transform:scaleX(1.1719);-webkit-text-stroke:0.25px #111;"><svg width="4.51" height="9.70" viewBox="0 0 4.51 9.70" style="vertical-align:0"><path d="M0.42 0H3.67V9.70H1.97V2.11H0.42Z" fill="currentColor"/></svg> 760.00</div>
<div class="t" style="left:701.26px;top:553.00px;font-size:14.1px;font-weight:bold;color:#111;letter-spacing:-0.504px;transform:scaleX(1.3403);-webkit-text-stroke:0.25px #111;">-</div>
<div class="t" style="left:767.66px;top:553.00px;font-size:14.1px;font-weight:bold;color:#111;letter-spacing:-0.504px;transform:scaleX(1.3403);-webkit-text-stroke:0.25px #111;">-</div>
<div class="t" style="left:1248.37px;top:553.00px;font-size:14.1px;font-weight:bold;color:#111;letter-spacing:-0.504px;transform:scaleX(1.1448);-webkit-text-stroke:0.25px #111;">-</div>
<div class="b" style="left:14px;top:581px;width:1475px;height:35px;background:#f9f9f9;"></div>
<div class="b" style="left:14px;top:615px;width:1475px;height:1px;background:#e6e6e6;"></div>
<svg class="b" style="left:55.6px;top:588.5999999999999px" width="15" height="15" viewBox="0 0 15 15"><rect width="14.8" height="14.9" rx="2" fill="#e91e63"/><path d="M2.6 7.4L6.1 10.6L12.2 4.6" stroke="#fff" stroke-width="2.2" fill="none"/></svg>
<div class="t" style="left:104.14px;top:588.00px;font-size:14.1px;font-weight:bold;color:#2f78bf;letter-spacing:0.042px;transform:scaleX(1.0076);-webkit-text-stroke:0.25px #2f78bf;">Тетяна Толочко</div>
<div class="t" style="left:293.84px;top:588.00px;font-size:14.1px;font-weight:bold;color:#2f78bf;letter-spacing:0.115px;transform:scaleX(1.0214);-webkit-text-stroke:0.25px #2f78bf;">Бухгалтерія</div>
<div class="b" style="left:429px;top:589px;width:29px;height:17px;background:#fff;border-radius:9px;box-shadow:0 0 1px 1px #f0f0f0;"></div>
<div class="t" style="left:434.84px;top:587.00px;font-size:12px;font-weight:bold;color:#111;letter-spacing:-0.429px;transform:scaleX(1.0022);-webkit-text-stroke:0.25px #111;"><svg width="3.84" height="8.26" viewBox="0 0 3.84 8.26" style="vertical-align:0"><path d="M0.36 0H3.12V8.26H1.68V1.80H0.36Z" fill="currentColor"/></svg>03</div>
<div class="t" style="left:518.19px;top:588.00px;font-size:14.1px;font-weight:bold;color:#111;letter-spacing:-0.504px;transform:scaleX(1.2083);-webkit-text-stroke:0.25px #111;"><svg width="4.51" height="9.70" viewBox="0 0 4.51 9.70" style="vertical-align:0"><path d="M0.42 0H3.67V9.70H1.97V2.11H0.42Z" fill="currentColor"/></svg>0 000.00</div>
<div class="t" style="left:813.94px;top:588.00px;font-size:14.1px;font-weight:bold;color:#111;letter-spacing:-0.504px;transform:scaleX(1.1393);-webkit-text-stroke:0.25px #111;">2<svg width="4.51" height="9.70" viewBox="0 0 4.51 9.70" style="vertical-align:0"><path d="M0.42 0H3.67V9.70H1.97V2.11H0.42Z" fill="currentColor"/></svg>.0</div>
<div class="t" style="left:860.79px;top:588.00px;font-size:14.1px;font-weight:bold;color:#111;letter-spacing:-0.504px;transform:scaleX(1.2010);-webkit-text-stroke:0.25px #111;"><svg width="4.51" height="9.70" viewBox="0 0 4.51 9.70" style="vertical-align:0"><path d="M0.42 0H3.67V9.70H1.97V2.11H0.42Z" fill="currentColor"/></svg>0 000.00</div>
<div class="t" style="left:942.39px;top:588.00px;font-size:14.1px;font-weight:bold;color:#111;letter-spacing:-0.504px;transform:scaleX(1.1680);-webkit-text-stroke:0.25px #111;">6 380.00</div>
<div class="t" style="left:1017.33px;top:588.00px;font-size:14.1px;font-weight:bold;color:#111;letter-spacing:-0.504px;transform:scaleX(1.1495);-webkit-text-stroke:0.25px #111;">3 620.00</div>
<div class="t" style="left:1091.32px;top:588.00px;font-size:14.1px;font-weight:bold;color:#111;letter-spacing:-0.504px;transform:scaleX(1.1753);-webkit-text-stroke:0.25px #111;">3 080.00</div>
<div class="t" style="left:1269.03px;top:588.00px;font-size:14.1px;font-weight:bold;color:#111;letter-spacing:-0.504px;transform:scaleX(1.1495);-webkit-text-stroke:0.25px #111;">3 620.00</div>
<div class="t" style="left:1421.63px;top:588.00px;font-size:14.1px;font-weight:bold;color:#111;letter-spacing:-0.504px;transform:scaleX(1.1633);-webkit-text-stroke:0.25px #111;">2 200.00</div>
<div class="t" style="left:701.26px;top:588.00px;font-size:14.1px;font-weight:bold;color:#111;letter-spacing:-0.504px;transform:scaleX(1.3403);-webkit-text-stroke:0.25px #111;">-</div>
<div class="t" style="left:767.66px;top:588.00px;font-size:14.1px;font-weight:bold;color:#111;letter-spacing:-0.504px;transform:scaleX(1.3403);-webkit-text-stroke:0.25px #111;">-</div>
<div class="t" style="left:1248.37px;top:588.00px;font-size:14.1px;font-weight:bold;color:#111;letter-spacing:-0.504px;transform:scaleX(1.1448);-webkit-text-stroke:0.25px #111;">-</div>
<div class="t" style="left:37.02px;top:634.00px;font-size:12.8px;font-weight:bold;color:#333;letter-spacing:0.145px;transform:scaleX(1.0254);-webkit-text-stroke:0.25px #333;">Всього</div>
<div class="t" style="left:524.26px;top:634.00px;font-size:12.8px;font-weight:bold;color:#444;letter-spacing:-0.457px;transform:scaleX(1.2081);-webkit-text-stroke:0.25px #444;">26 000.00</div>
<div class="t" style="left:815.65px;top:634.00px;font-size:12.8px;font-weight:bold;color:#444;letter-spacing:-0.457px;transform:scaleX(1.1623);-webkit-text-stroke:0.25px #444;">63.0</div>
<div class="t" style="left:875.28px;top:634.00px;font-size:12.8px;font-weight:bold;color:#444;letter-spacing:-0.457px;transform:scaleX(1.1530);-webkit-text-stroke:0.25px #444;">26 <svg width="4.10" height="8.81" viewBox="0 0 4.10 8.81" style="vertical-align:0"><path d="M0.38 0H3.33V8.81H1.79V1.92H0.38Z" fill="currentColor"/></svg>35.<svg width="4.10" height="8.81" viewBox="0 0 4.10 8.81" style="vertical-align:0"><path d="M0.38 0H3.33V8.81H1.79V1.92H0.38Z" fill="currentColor"/></svg>0</div>
<div class="t" style="left:947.54px;top:634.00px;font-size:12.8px;font-weight:bold;color:#444;letter-spacing:-0.457px;transform:scaleX(1.1990);-webkit-text-stroke:0.25px #444;"><svg width="4.10" height="8.81" viewBox="0 0 4.10 8.81" style="vertical-align:0"><path d="M0.38 0H3.33V8.81H1.79V1.92H0.38Z" fill="currentColor"/></svg>7 8<svg width="4.10" height="8.81" viewBox="0 0 4.10 8.81" style="vertical-align:0"><path d="M0.38 0H3.33V8.81H1.79V1.92H0.38Z" fill="currentColor"/></svg>9.08</div>
<div class="t" style="left:1028.22px;top:634.00px;font-size:12.8px;font-weight:bold;color:#444;letter-spacing:-0.457px;transform:scaleX(1.1614);-webkit-text-stroke:0.25px #444;">8 3<svg width="4.10" height="8.81" viewBox="0 0 4.10 8.81" style="vertical-align:0"><path d="M0.38 0H3.33V8.81H1.79V1.92H0.38Z" fill="currentColor"/></svg>6.02</div>
<div class="t" style="left:1096.90px;top:634.00px;font-size:12.8px;font-weight:bold;color:#444;letter-spacing:-0.457px;transform:scaleX(1.2301);-webkit-text-stroke:0.25px #444;">8 008.00</div>
<div class="t" style="left:1279.52px;top:634.00px;font-size:12.8px;font-weight:bold;color:#444;letter-spacing:-0.457px;transform:scaleX(1.1638);-webkit-text-stroke:0.25px #444;">8 3<svg width="4.10" height="8.81" viewBox="0 0 4.10 8.81" style="vertical-align:0"><path d="M0.38 0H3.33V8.81H1.79V1.92H0.38Z" fill="currentColor"/></svg>6.02</div>
<div class="t" style="left:1431.75px;top:634.00px;font-size:12.8px;font-weight:bold;color:#444;letter-spacing:-0.457px;transform:scaleX(1.1222);-webkit-text-stroke:0.25px #444;">5 749.72</div>
<div class="t" style="left:704.32px;top:634.00px;font-size:12.8px;font-weight:bold;color:#444;letter-spacing:-0.457px;transform:scaleX(1.3533);-webkit-text-stroke:0.25px #444;">-</div>
<div class="t" style="left:771.39px;top:634.00px;font-size:12.8px;font-weight:bold;color:#444;letter-spacing:-0.457px;transform:scaleX(1.2303);-webkit-text-stroke:0.25px #444;">-</div>
<div class="t" style="left:1251.36px;top:634.00px;font-size:12.8px;font-weight:bold;color:#444;letter-spacing:-0.457px;transform:scaleX(1.2918);-webkit-text-stroke:0.25px #444;">-</div>
</body></html>
